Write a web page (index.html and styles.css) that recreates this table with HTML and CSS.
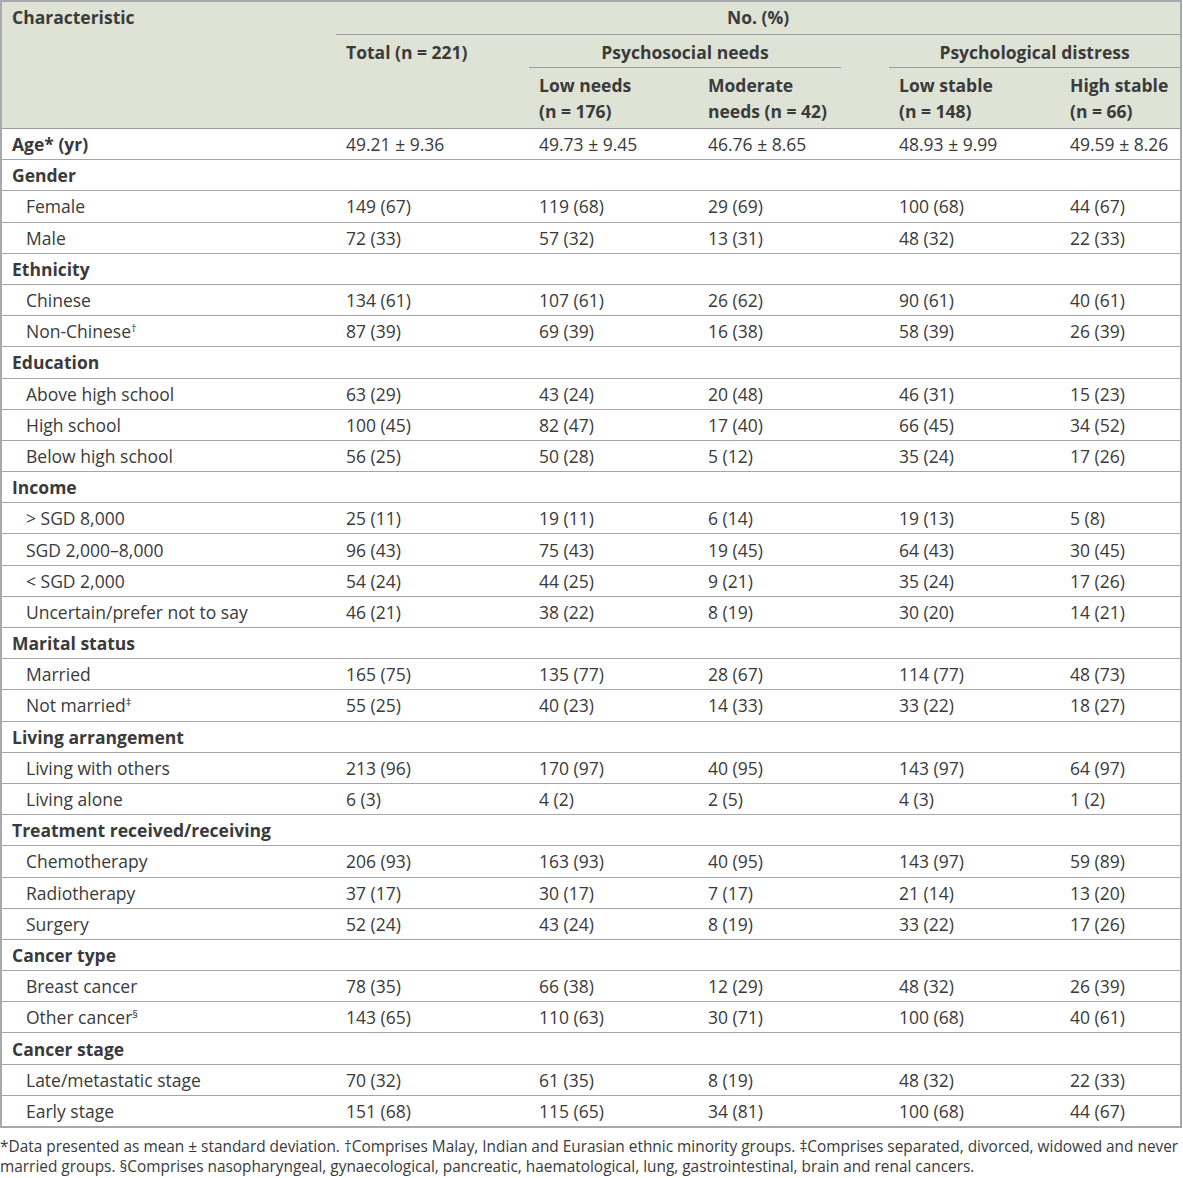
FILE: index.html
```html
<!DOCTYPE html>
<html>
<head>
<meta charset="utf-8">
<link rel="stylesheet" href="styles.css">
</head>
<body>
<table class="data">
  <colgroup>
    <col class="c-char"><col class="c-total"><col class="c-low"><col class="c-mod"><col class="c-gap"><col class="c-lows"><col class="c-high">
  </colgroup>
  <thead>
    <tr class="h1">
      <th rowspan="3" class="hchar">Characteristic</th>
      <th colspan="6" class="span rule">No. (%)</th>
    </tr>
    <tr class="h2">
      <th rowspan="2" class="htop">Total (n = 221)</th>
      <th colspan="2" class="span rule">Psychosocial needs</th>
      <th rowspan="2"></th>
      <th colspan="2" class="span rule">Psychological distress</th>
    </tr>
    <tr class="h3">
      <th>Low needs<br>(n = 176)</th>
      <th>Moderate<br>needs (n = 42)</th>
      <th>Low stable<br>(n = 148)</th>
      <th>High stable<br>(n = 66)</th>
    </tr>
  </thead>
  <tbody>
    <tr class="first"><td class="cat">Age* (yr)</td><td>49.21 ± 9.36</td><td>49.73 ± 9.45</td><td colspan="2">46.76 ± 8.65</td><td>48.93 ± 9.99</td><td>49.59 ± 8.26</td></tr>
    <tr><td class="cat" colspan="7">Gender</td></tr>
    <tr><td class="sub">Female</td><td>149 (67)</td><td>119 (68)</td><td colspan="2">29 (69)</td><td>100 (68)</td><td>44 (67)</td></tr>
    <tr><td class="sub">Male</td><td>72 (33)</td><td>57 (32)</td><td colspan="2">13 (31)</td><td>48 (32)</td><td>22 (33)</td></tr>
    <tr><td class="cat" colspan="7">Ethnicity</td></tr>
    <tr><td class="sub">Chinese</td><td>134 (61)</td><td>107 (61)</td><td colspan="2">26 (62)</td><td>90 (61)</td><td>40 (61)</td></tr>
    <tr><td class="sub">Non-Chinese<sup>†</sup></td><td>87 (39)</td><td>69 (39)</td><td colspan="2">16 (38)</td><td>58 (39)</td><td>26 (39)</td></tr>
    <tr><td class="cat" colspan="7">Education</td></tr>
    <tr><td class="sub">Above high school</td><td>63 (29)</td><td>43 (24)</td><td colspan="2">20 (48)</td><td>46 (31)</td><td>15 (23)</td></tr>
    <tr><td class="sub">High school</td><td>100 (45)</td><td>82 (47)</td><td colspan="2">17 (40)</td><td>66 (45)</td><td>34 (52)</td></tr>
    <tr><td class="sub">Below high school</td><td>56 (25)</td><td>50 (28)</td><td colspan="2">5 (12)</td><td>35 (24)</td><td>17 (26)</td></tr>
    <tr><td class="cat" colspan="7">Income</td></tr>
    <tr><td class="sub">&gt; SGD 8,000</td><td>25 (11)</td><td>19 (11)</td><td colspan="2">6 (14)</td><td>19 (13)</td><td>5 (8)</td></tr>
    <tr><td class="sub">SGD 2,000–8,000</td><td>96 (43)</td><td>75 (43)</td><td colspan="2">19 (45)</td><td>64 (43)</td><td>30 (45)</td></tr>
    <tr><td class="sub">&lt; SGD 2,000</td><td>54 (24)</td><td>44 (25)</td><td colspan="2">9 (21)</td><td>35 (24)</td><td>17 (26)</td></tr>
    <tr><td class="sub">Uncertain/prefer not to say</td><td>46 (21)</td><td>38 (22)</td><td colspan="2">8 (19)</td><td>30 (20)</td><td>14 (21)</td></tr>
    <tr><td class="cat" colspan="7">Marital status</td></tr>
    <tr><td class="sub">Married</td><td>165 (75)</td><td>135 (77)</td><td colspan="2">28 (67)</td><td>114 (77)</td><td>48 (73)</td></tr>
    <tr><td class="sub">Not married<sup>‡</sup></td><td>55 (25)</td><td>40 (23)</td><td colspan="2">14 (33)</td><td>33 (22)</td><td>18 (27)</td></tr>
    <tr><td class="cat" colspan="7">Living arrangement</td></tr>
    <tr><td class="sub">Living with others</td><td>213 (96)</td><td>170 (97)</td><td colspan="2">40 (95)</td><td>143 (97)</td><td>64 (97)</td></tr>
    <tr><td class="sub">Living alone</td><td>6 (3)</td><td>4 (2)</td><td colspan="2">2 (5)</td><td>4 (3)</td><td>1 (2)</td></tr>
    <tr><td class="cat" colspan="7">Treatment received/receiving</td></tr>
    <tr><td class="sub">Chemotherapy</td><td>206 (93)</td><td>163 (93)</td><td colspan="2">40 (95)</td><td>143 (97)</td><td>59 (89)</td></tr>
    <tr><td class="sub">Radiotherapy</td><td>37 (17)</td><td>30 (17)</td><td colspan="2">7 (17)</td><td>21 (14)</td><td>13 (20)</td></tr>
    <tr><td class="sub">Surgery</td><td>52 (24)</td><td>43 (24)</td><td colspan="2">8 (19)</td><td>33 (22)</td><td>17 (26)</td></tr>
    <tr><td class="cat" colspan="7">Cancer type</td></tr>
    <tr><td class="sub">Breast cancer</td><td>78 (35)</td><td>66 (38)</td><td colspan="2">12 (29)</td><td>48 (32)</td><td>26 (39)</td></tr>
    <tr><td class="sub">Other cancer<sup>§</sup></td><td>143 (65)</td><td>110 (63)</td><td colspan="2">30 (71)</td><td>100 (68)</td><td>40 (61)</td></tr>
    <tr><td class="cat" colspan="7">Cancer stage</td></tr>
    <tr><td class="sub">Late/metastatic stage</td><td>70 (32)</td><td>61 (35)</td><td colspan="2">8 (19)</td><td>48 (32)</td><td>22 (33)</td></tr>
    <tr class="last"><td class="sub">Early stage</td><td>151 (68)</td><td>115 (65)</td><td colspan="2">34 (81)</td><td>100 (68)</td><td>44 (67)</td></tr>
  </tbody>
</table>
<p class="notes">*Data presented as mean ± standard deviation. †Comprises Malay, Indian and Eurasian ethnic minority groups. ‡Comprises separated, divorced, widowed and never<br>married groups. §Comprises nasopharyngeal, gynaecological, pancreatic, haematological, lung, gastrointestinal, brain and renal cancers.</p>
</body>
</html>
```

FILE: styles.css
```css
html, body {
  margin: 0;
  padding: 0;
  background: #ffffff;
}
body {
  font-family: "Open Sans", "Noto Sans", sans-serif;
  color: #3a3a3a;
}
.data {
  width: 1182px;
  table-layout: fixed;
  border-collapse: separate;
  border-spacing: 0;
  border: 2px solid #a7a9ac;
  font-size: 17.5px;
}
.c-char { width: 334px; }
.c-total { width: 193px; }
.c-low { width: 169px; }
.c-mod { width: 143px; }
.c-gap { width: 48px; }
.c-lows { width: 171px; }
.c-high { width: 120px; }

thead th {
  background: #dee3d6;
  font-weight: 700;
  text-align: left;
  vertical-align: top;
  padding: 0 0 0 10px;
  line-height: 26px;
  color: #3b3b3b;
  white-space: nowrap;
}
thead th.span {
  text-align: center;
  padding-left: 0;
  padding-right: 0;
}
thead th.rule {
  border-bottom: 1px solid #9a9c9a;
}
.h1 { height: 33px; }
.h1 th { padding-top: 2px; }
.h2 { height: 33px; }
.h2 th { padding-top: 4px; }
.h3 { height: 60px; }
.h3 th { padding-top: 4px; }

tbody td {
  padding: 0 0 0 10px;
  line-height: 26px;
  border-bottom: 1px solid #a6a6a6;
  white-space: nowrap;
}
tbody tr { height: 31.2px; }
tbody tr.first td { border-top: 1px solid #9a9c9a; }
tbody tr.first { height: 32.2px; }
tbody tr.last td { border-bottom: none; }
tbody tr.last { height: 30.2px; }
td.cat { font-weight: 700; }
td.sub { padding-left: 24px; }
sup {
  font-size: 11px;
  line-height: 0;
  vertical-align: 6px;
}
.notes {
  margin: 9px 0 0 0;
  font-size: 15.4px;
  line-height: 20px;
  color: #3a3a3a;
  white-space: nowrap;
}
```
